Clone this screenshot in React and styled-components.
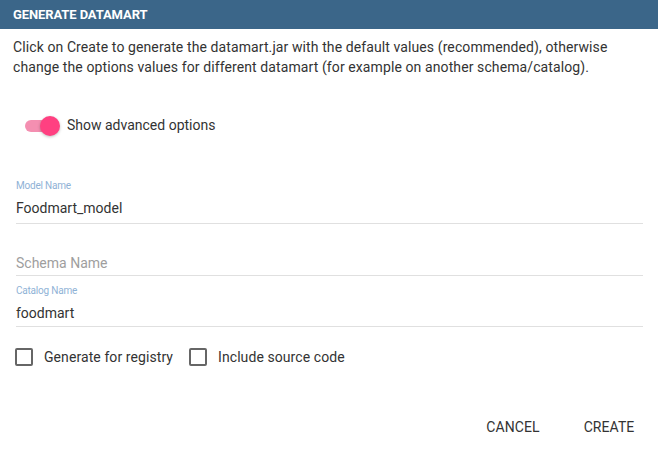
import React from "react";
import styled, { createGlobalStyle } from "styled-components";

const Global = createGlobalStyle`
  html, body { margin: 0; padding: 0; background: #fff; }
  body { font-family: Roboto, "Liberation Sans", sans-serif; }
  * { box-sizing: border-box; }
`;

const Dialog = styled.div`
  width: 658px;
  height: 449px;
  background: #fff;
  display: flex;
  flex-direction: column;
`;

const Header = styled.div`
  height: 29px;
  background: #3b6689;
  color: #fff;
  font-weight: 700;
  font-size: 13px;
  display: flex;
  align-items: center;
  padding-left: 13px;
  letter-spacing: -0.1px;
`;

const Body = styled.div`
  padding: 8px 15px 0 13px;
  display: flex;
  flex-direction: column;
`;

const Intro = styled.p`
  margin: 0;
  font-size: 14px;
  line-height: 20px;
  color: #333;
  letter-spacing: 0.1px;
`;

const ToggleRow = styled.label`
  display: flex;
  align-items: center;
  gap: 7px;
  margin: 38px 0 0 12px;
  font-size: 14px;
  color: #333;
  height: 20px;
`;

const Switch = styled.span`
  position: relative;
  width: 35px;
  height: 20px;
  display: inline-block;
  &::before {
    content: "";
    position: absolute;
    left: 0;
    top: 5px;
    width: 34px;
    height: 12px;
    border-radius: 6px;
    background: #f48fb1;
  }
  &::after {
    content: "";
    position: absolute;
    left: 15px;
    top: 1px;
    width: 20px;
    height: 20px;
    border-radius: 50%;
    background: #ff4081;
    box-shadow: 0 1px 3px rgba(0, 0, 0, 0.25);
  }
`;

const Fields = styled.div`
  display: flex;
  flex-direction: column;
  margin-top: 44px;
  padding-left: 3px;
  width: 630px;
`;

const Field = styled.div`
  display: flex;
  flex-direction: column;
  height: ${(p) => p.$h}px;
  justify-content: flex-end;
  border-bottom: 1px solid #e0e0e0;
`;

const FieldLabel = styled.div`
  font-size: 10px;
  color: #8fb2d6;
  line-height: 12px;
  letter-spacing: -0.2px;
`;

const FieldValue = styled.div`
  font-size: 14px;
  line-height: 20px;
  color: ${(p) => (p.$placeholder ? "#9e9e9e" : "#333")};
  padding: ${(p) => (p.$placeholder ? "0 0 2px" : `6px 0 ${p.$pb ?? 5}px`)};
`;

const Checks = styled.div`
  display: flex;
  align-items: center;
  margin-top: 21px;
  padding-left: 2px;
  gap: 16px;
`;

const Check = styled.label`
  display: flex;
  align-items: center;
  gap: 11px;
  font-size: 14px;
  color: #333;
  letter-spacing: 0.08px;
`;

const Box = styled.span`
  width: 18px;
  height: 18px;
  border: 2px solid #666;
  border-radius: 2px;
  display: inline-block;
`;

const Actions = styled.div`
  display: flex;
  justify-content: flex-end;
  margin-top: auto;
  padding: 0 5px 4px 0;
`;

const Button = styled.button`
  background: none;
  border: none;
  font-family: Roboto, "Liberation Sans", sans-serif;
  font-size: 14px;
  color: #333;
  text-transform: uppercase;
  letter-spacing: 0.08px;
  padding: 0 16px;
  height: 36px;
  min-width: 88px;
  cursor: pointer;
  margin-left: ${(p) => p.$ml || 0}px;
`;

export default function App() {
  return (
    <>
      <Global />
      <Dialog>
        <Header>GENERATE DATAMART</Header>
        <Body>
          <Intro>
            Click on Create to generate the datamart.jar with the default values (recommended), otherwise
            change the options values for different datamart (for example on another schema/catalog).
          </Intro>
          <ToggleRow>
            <Switch />
            Show advanced options
          </ToggleRow>
          <Fields>
            <Field $h={45}>
              <FieldLabel>Model Name</FieldLabel>
              <FieldValue>Foodmart_model</FieldValue>
            </Field>
            <Field $h={52}>
              <FieldValue $placeholder>Schema Name</FieldValue>
            </Field>
            <Field $h={51}>
              <FieldLabel>Catalog Name</FieldLabel>
              <FieldValue $pb={3}>foodmart</FieldValue>
            </Field>
          </Fields>
          <Checks>
            <Check>
              <Box />
              Generate for registry
            </Check>
            <Check>
              <Box />
              Include source code
            </Check>
          </Checks>
        </Body>
        <Actions>
          <Button>Cancel</Button>
          <Button $ml={8}>Create</Button>
        </Actions>
      </Dialog>
    </>
  );
}
